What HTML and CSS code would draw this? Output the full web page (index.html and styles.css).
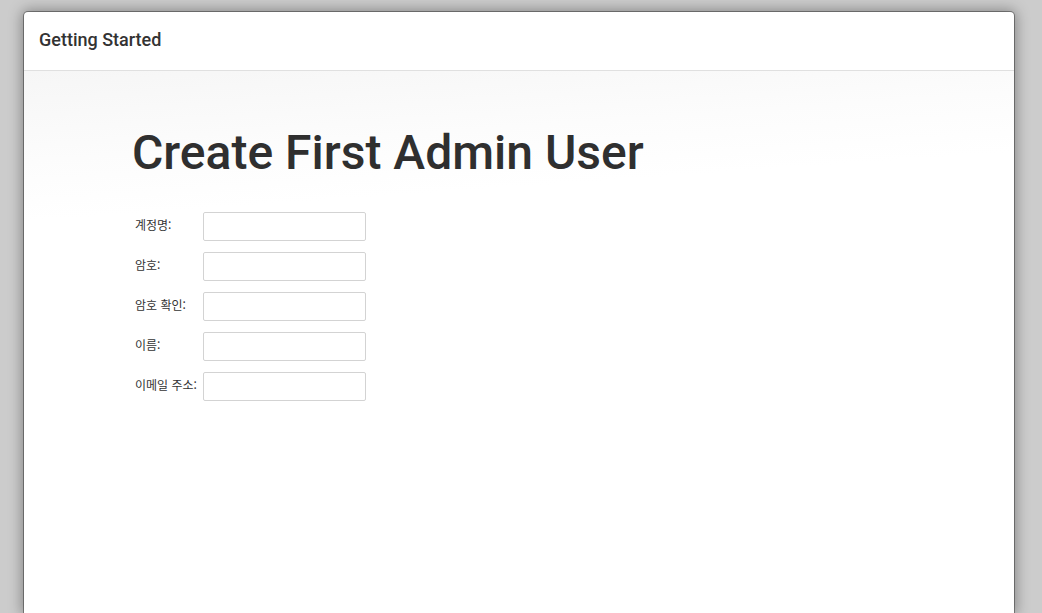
FILE: index.html
```html
<!DOCTYPE html>
<html lang="ko">
<head>
<meta charset="utf-8">
<title>Getting Started</title>
<link rel="stylesheet" href="styles.css">
</head>
<body>
<div class="dialog">
  <div class="dialog-header">Getting Started</div>
  <div class="dialog-body">
    <h1 class="title">Create First Admin User</h1>
    <form class="form">
      <label class="label" for="u">계정명:</label><input class="field" id="u" type="text">
      <label class="label" for="p1">암호:</label><input class="field" id="p1" type="password">
      <label class="label" for="p2">암호 확인:</label><input class="field" id="p2" type="password">
      <label class="label" for="n">이름:</label><input class="field" id="n" type="text">
      <label class="label" for="e">이메일 주소:</label><input class="field" id="e" type="text">
    </form>
  </div>
</div>
</body>
</html>
```
FILE: styles.css
```css
html, body {
  margin: 0;
  padding: 0;
  height: 100%;
  overflow: hidden;
}
body {
  background: #cccccc;
  font-family: Roboto, "Noto Sans CJK KR", sans-serif;
  color: #333;
  padding: 12px 28px 0 24px;
  box-sizing: border-box;
  display: flex;
  flex-direction: column;
}
.dialog {
  flex: 1;
  background: #fff;
  border-radius: 4px 4px 0 0;
  box-shadow: 0 0 0 1px rgba(0,0,0,0.35), 0 0 14px 2px rgba(0,0,0,0.35);
  display: flex;
  flex-direction: column;
  overflow: hidden;
}
.dialog-header {
  height: 59px;
  flex: none;
  box-sizing: border-box;
  border-bottom: 1px solid #e0e0e0;
  padding: 0 15px 3px;
  display: flex;
  align-items: center;
  font-size: 18px;
  font-weight: 500;
  color: #333;
}
.dialog-body {
  flex: 1;
  background: linear-gradient(176deg, #f6f6f6 0px, #fcfcfc 90px, #ffffff 150px);
  padding: 50px 108px 0;
}
.title {
  margin: 0 0 27px 0;
  font-weight: 500;
  font-size: 48px;
  line-height: 64px;
  color: #2f2f2f;
  letter-spacing: 0;
}
.form {
  display: grid;
  grid-template-columns: 68px 163px;
  row-gap: 11px;
  align-items: center;
  margin-left: 3px;
}
.label {
  font-family: "Noto Sans CJK KR", sans-serif;
  font-size: 12px;
  color: #333;
  align-self: start;
  padding-top: 4px;
}
.field {
  width: 163px;
  height: 29px;
  box-sizing: border-box;
  border: 1px solid #d3d3d3;
  border-radius: 2px;
  background: #fff;
  margin: 0;
}
```
